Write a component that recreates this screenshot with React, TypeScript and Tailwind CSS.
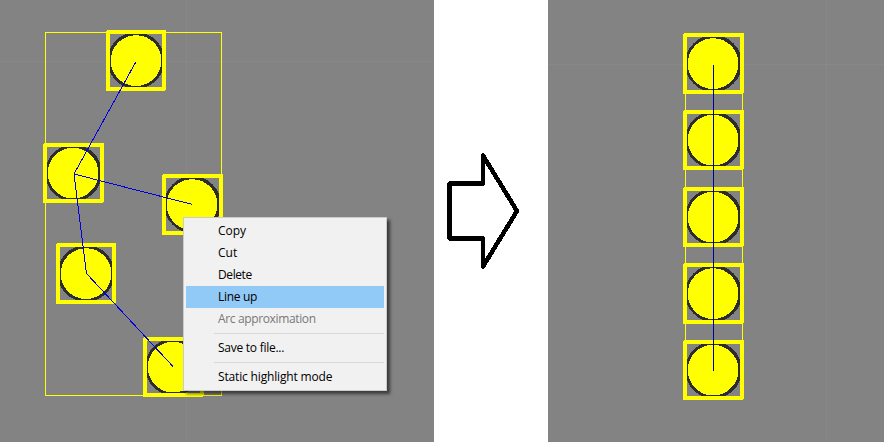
type Box = { x: number; y: number; w: number; h: number };

const scattered: Box[] = [
  { x: 106, y: 30, w: 60, h: 61 },
  { x: 43, y: 143, w: 61, h: 60 },
  { x: 162, y: 174, w: 61, h: 61 },
  { x: 56, y: 243, w: 60, h: 61 },
  { x: 143, y: 337, w: 61, h: 60 },
];

const aligned: Box[] = [
  { x: 135, y: 33, w: 61, h: 61 },
  { x: 135, y: 110, w: 61, h: 60 },
  { x: 135, y: 187, w: 61, h: 60 },
  { x: 135, y: 263, w: 61, h: 61 },
  { x: 135, y: 340, w: 61, h: 60 },
];

function Node({ x, y, w, h }: Box) {
  return (
    <g>
      <circle cx={x + w / 2} cy={y + h / 2} r={28.4} fill="#2c2c2c" />
      <rect x={x + 2} y={y + 2} width={w - 4} height={h - 4} fill="none" stroke="#ffff00" strokeWidth={4} strokeLinejoin="round" />
      <circle cx={x + 30.1} cy={y + h / 2 + 0.1} r={25.4} fill="#ffff00" />
    </g>
  );
}

type Item = { label: string; tracking?: string; active?: boolean; disabled?: boolean };

const groups: Item[][] = [
  [
    { label: "Copy" },
    { label: "Cut" },
    { label: "Delete", tracking: "tracking-[-0.4px]" },
    { label: "Line up", tracking: "tracking-[-0.3px]", active: true },
    { label: "Arc approximation", tracking: "tracking-[-0.36px]", disabled: true },
  ],
  [{ label: "Save to file...", tracking: "tracking-[-0.26px]" }],
  [{ label: "Static highlight mode", tracking: "tracking-[-0.16px]" }],
];

function ContextMenu() {
  return (
    <div className="absolute left-[183px] top-[217px] h-[174px] w-[204px] border border-[#cccccc] bg-[#f1f1f1] p-[2px] shadow-[3px_3px_3px_rgba(0,0,0,0.55)]">
      {groups.map((items, index) => (
        <div key={index}>
          {index > 0 && <div className="my-[3px] ml-[28px] h-px bg-[#d7d7d7]" />}
          {items.map(({ label, tracking = "", active, disabled }) => (
            <div
              key={label}
              className={`flex h-[22px] items-center whitespace-nowrap pl-[32px] text-[12px] ${tracking} ${
                active ? "bg-[#91c9f7]" : ""
              } ${disabled ? "text-[#787878]" : "text-black"}`}
            >
              {label}
            </div>
          ))}
        </div>
      ))}
    </div>
  );
}

export default function App() {
  return (
    <div className="relative flex h-[442px] w-[884px] overflow-hidden bg-white font-['Open_Sans','Noto_Sans',sans-serif]">
      <div className="w-[434px] shrink-0 bg-[#838383]">
        <svg width="434" height="442" shapeRendering="crispEdges" className="block">
          <path d="M0 61.5H434M186.5 0V442" stroke="#888888" />
          <rect x="45.5" y="32.5" width="176" height="363" fill="none" stroke="#ffff00" />
          {scattered.map((box) => (
            <Node key={box.y} {...box} />
          ))}
          <path d="M135.5 62.5L74 174L192.5 204.5M74 174L86.5 273.5L173 366.5" fill="none" stroke="#0000e0" />
        </svg>
      </div>
      <div className="w-[114px] shrink-0">
        <svg width="114" height="442" shapeRendering="crispEdges" className="block">
          <path
            d="M15.5 183.5H49V155.5L83 211L49 266.5V238.5H15.5Z"
            fill="none"
            stroke="#000000"
            strokeWidth="4.5"
            strokeLinejoin="round"
          />
        </svg>
      </div>
      <div className="w-[336px] shrink-0 bg-[#838383]">
        <svg width="336" height="442" shapeRendering="crispEdges" className="block">
          <path d="M0 64.5H336M278.5 0V442" stroke="#888888" />
          <rect x="137.5" y="36.5" width="57" height="361" fill="none" stroke="#ffff00" />
          {aligned.map((box) => (
            <Node key={box.y} {...box} />
          ))}
          <path d="M165.5 65V371" stroke="#00009c" />
        </svg>
      </div>
      <ContextMenu />
    </div>
  );
}
